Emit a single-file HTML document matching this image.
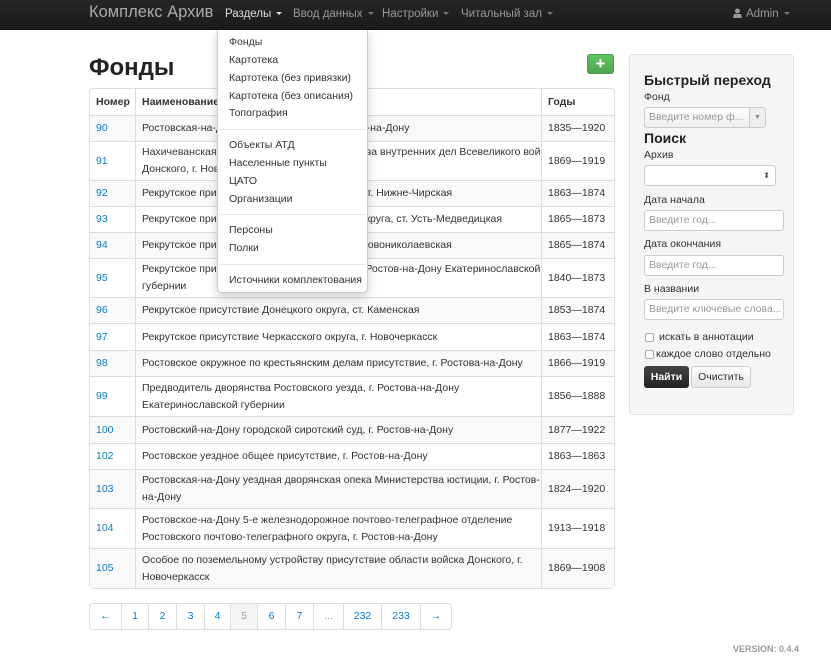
<!DOCTYPE html>
<html><head><meta charset="utf-8"><style>
*{box-sizing:border-box;margin:0;padding:0}
body{width:831px;height:656px;background:#fff;font-family:"Liberation Sans","Noto Sans CJK SC",sans-serif;font-size:10.5px;color:#333;position:relative;overflow:hidden}
.nav{position:absolute;left:0;top:0;width:831px;height:30px;background:linear-gradient(#262626,#1b1b1b);border-bottom:1px solid #111}
.nav span{position:absolute;top:0;line-height:28px;color:#999;font-size:11.5px;white-space:nowrap}
.car{display:inline-block;width:0;height:0;border-left:3px solid transparent;border-right:3px solid transparent;border-top:3px solid #777;vertical-align:middle;margin-left:5px}
.a{position:absolute;white-space:nowrap}
h1{position:absolute;left:89px;top:54px;font-size:24px;font-weight:bold;color:#222}
table{position:absolute;left:89px;top:88px;width:524px;table-layout:fixed;border-collapse:separate;border-spacing:0;border:1px solid #ddd;border-radius:4px}
td,th{border-left:1px solid #ddd;border-top:1px solid #ddd;padding:0 6px;text-align:left;line-height:17px;vertical-align:middle;font-size:10.5px;overflow:hidden;white-space:nowrap}
th{border-top:none;font-weight:bold;height:26px}
tr td:first-child,tr th:first-child{border-left:none}
tr:nth-child(even) td{background:#f9f9f9}
td a{color:#0a7bc4}
.dd{position:absolute;left:217px;top:30px;width:151px;height:263px;background:#fff;border:1px solid #ccc;border-top:none;border-radius:0 0 5px 5px;box-shadow:0 4px 10px rgba(0,0,0,.2)}
.dd div{position:absolute;left:11px;font-size:10.5px;color:#333;white-space:nowrap}
.dd hr{position:absolute;left:1px;width:147px;border:none;border-top:1px solid #e5e5e5}
.side{position:absolute;left:629px;top:54px;width:165px;height:361px;background:#f5f5f5;border:1px solid #e3e3e3;border-radius:4px}
.inp{position:absolute;background:#fff;border:1px solid #ccc;border-radius:3px;color:#999;font-size:10.5px;padding-left:4px;line-height:19px;white-space:nowrap;overflow:hidden}
.pg{position:absolute;left:89px;top:603px;height:27px;border:1px solid #ddd;border-radius:4px;display:flex}
.pg div{border-left:1px solid #ddd;color:#0a7bc4;text-align:center;line-height:25px;font-size:10.5px}
.pg div:first-child{border-left:none}
</style></head><body>
<div class="nav">
<span style="left:89px;font-size:16.5px;color:#aaa;line-height:24px">Комплекс Архив</span>
<span style="left:225px;color:#ddd">Разделы<i class="car" style="border-top-color:#ddd"></i></span>
<span style="left:293px">Ввод данных<i class="car"></i></span>
<span style="left:382px">Настройки<i class="car"></i></span>
<span style="left:461px">Читальный зал<i class="car"></i></span>
<span style="left:733px"><svg width="9" height="10" viewBox="0 0 9 10" style="vertical-align:-1px;margin-right:4px"><circle cx="4.5" cy="3" r="2.5" fill="#999"/><path d="M0 10 L1 6 H8 L9 10Z" fill="#999"/></svg>Admin<i class="car"></i></span>
</div>
<h1>Фонды</h1>
<div class="a" style="left:587px;top:54px;width:27px;height:20px;background:linear-gradient(#62c462,#51a351);border:1px solid #4a9a4a;border-radius:3px;color:#fff;font-size:17px;font-weight:bold;text-align:center;line-height:17px">+</div>
<table>
<colgroup><col style="width:45px"><col style="width:406px"><col style="width:73px"></colgroup>
<tr><th>Номер</th><th>Наименование</th><th>Годы</th></tr>
<tr style="height:26px"><td><a>90</a></td><td>Ростовская-на-Дону городская дума, г. Ростов-на-Дону</td><td>1835—1920</td></tr>
<tr style="height:39px"><td><a>91</a></td><td>Нахичеванская городская управа Министерства внутренних дел Всевеликого войска<br>Донского, г. Новочеркасск</td><td>1869—1919</td></tr>
<tr style="height:26px"><td><a>92</a></td><td>Рекрутское присутствие Черкасского округа, ст. Нижне-Чирская</td><td>1863—1874</td></tr>
<tr style="height:26px"><td><a>93</a></td><td>Рекрутское присутствие Усть-Медведицкого округа, ст. Усть-Медведицкая</td><td>1865—1873</td></tr>
<tr style="height:26px"><td><a>94</a></td><td>Рекрутское присутствие Миусского округа, г. Новониколаевская</td><td>1865—1874</td></tr>
<tr style="height:39px"><td><a>95</a></td><td>Рекрутское присутствие Ростовского уезда, г. Ростов-на-Дону Екатеринославской<br>губернии</td><td>1840—1873</td></tr>
<tr style="height:26px"><td><a>96</a></td><td>Рекрутское присутствие Донецкого округа, ст. Каменская</td><td>1853—1874</td></tr>
<tr style="height:27px"><td><a>97</a></td><td>Рекрутское присутствие Черкасского округа, г. Новочеркасск</td><td>1863—1874</td></tr>
<tr style="height:26px"><td><a>98</a></td><td>Ростовское окружное по крестьянским делам присутствие, г. Ростова-на-Дону</td><td>1866—1919</td></tr>
<tr style="height:40px"><td><a>99</a></td><td>Предводитель дворянства Ростовского уезда, г. Ростова-на-Дону<br>Екатеринославской губернии</td><td>1856—1888</td></tr>
<tr style="height:27px"><td><a>100</a></td><td>Ростовский-на-Дону городской сиротский суд, г. Ростов-на-Дону</td><td>1877—1922</td></tr>
<tr style="height:26px"><td><a>102</a></td><td>Ростовское уездное общее присутствие, г. Ростов-на-Дону</td><td>1863—1863</td></tr>
<tr style="height:39px"><td><a>103</a></td><td>Ростовская-на-Дону уездная дворянская опека Министерства юстиции, г. Ростов-<br>на-Дону</td><td>1824—1920</td></tr>
<tr style="height:40px"><td><a>104</a></td><td>Ростовское-на-Дону 5-е железнодорожное почтово-телеграфное отделение<br>Ростовского почтово-телеграфного округа, г. Ростов-на-Дону</td><td>1913—1918</td></tr>
<tr style="height:40px"><td><a>105</a></td><td>Особое по поземельному устройству присутствие области войска Донского, г.<br>Новочеркасск</td><td>1869—1908</td></tr>
</table>
<div class="dd">
<div style="top:6px">Фонды</div><div style="top:24px">Картотека</div><div style="top:42px">Картотека (без привязки)</div><div style="top:60px">Картотека (без описания)</div><div style="top:77px">Топография</div>
<hr style="top:99px">
<div style="top:109px">Объекты АТД</div><div style="top:127px">Населенные пункты</div><div style="top:145px">ЦАТО</div><div style="top:163px">Организации</div>
<hr style="top:184px">
<div style="top:194px">Персоны</div><div style="top:212px">Полки</div>
<hr style="top:234px">
<div style="top:244px">Источники комплектования</div>
</div>
<div class="side">
<div class="a" style="left:14px;top:17px;font-size:14px;font-weight:bold;color:#222">Быстрый переход</div>
<div class="a" style="left:14px;top:36px">Фонд</div>
<div class="inp" style="left:14px;top:52px;width:122px;height:21px;background:linear-gradient(#fff,#eee);padding-right:18px">Введите номер ф...<span style="position:absolute;right:0;top:0;width:16px;height:19px;border-left:1px solid #ccc;background:#eee;text-align:center;font-size:7px;color:#888">▼</span></div>
<div class="a" style="left:14px;top:75px;font-size:14px;font-weight:bold;color:#222">Поиск</div>
<div class="a" style="left:14px;top:94px">Архив</div>
<div class="inp" style="left:14px;top:110px;width:132px;height:21px"><span style="position:absolute;right:5px;top:0;font-size:8px;color:#555">⬍</span></div>
<div class="a" style="left:14px;top:139px">Дата начала</div>
<div class="inp" style="left:14px;top:155px;width:140px;height:21px">Введите год...</div>
<div class="a" style="left:14px;top:183px">Дата окончания</div>
<div class="inp" style="left:14px;top:200px;width:140px;height:21px">Введите год...</div>
<div class="a" style="left:14px;top:228px">В названии</div>
<div class="inp" style="left:14px;top:244px;width:140px;height:21px">Введите ключевые слова...</div>
<div class="a" style="left:15px;top:278px;width:9px;height:9px;border:1px solid #aaa;border-radius:2px;background:#fff"></div>
<div class="a" style="left:29px;top:276px">искать в аннотации</div>
<div class="a" style="left:15px;top:295px;width:9px;height:9px;border:1px solid #aaa;border-radius:2px;background:#fff"></div>
<div class="a" style="left:26px;top:293px">каждое слово отдельно</div>
<div class="a" style="left:14px;top:311px;width:45px;height:22px;background:linear-gradient(#444,#222);border-radius:3px;color:#fff;font-weight:bold;text-align:center;line-height:22px">Найти</div>
<div class="a" style="left:61px;top:311px;width:60px;height:22px;background:linear-gradient(#fff,#e6e6e6);border:1px solid #ccc;border-radius:3px;text-align:center;line-height:20px">Очистить</div>
</div>
<div class="pg">
<div style="width:31px">←</div><div style="width:27px">1</div><div style="width:28px">2</div><div style="width:28px">3</div><div style="width:26px">4</div><div style="width:27px;background:#f5f5f5;color:#999">5</div><div style="width:28px">6</div><div style="width:28px">7</div><div style="width:30px;color:#999">...</div><div style="width:38px">232</div><div style="width:39px">233</div><div style="width:31px">→</div>
</div>
<div class="a" style="left:733px;top:644px;font-size:9px;font-weight:bold;color:#999">VERSION: 0.4.4</div>
</body></html>
